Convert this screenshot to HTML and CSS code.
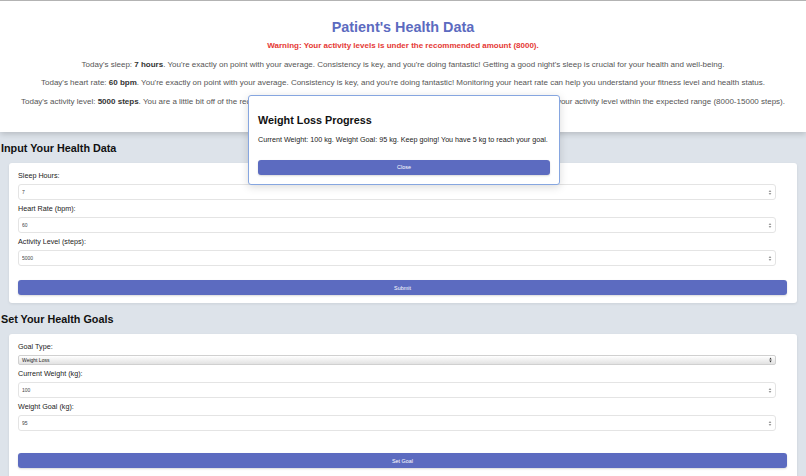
FILE: index.html
```html
<!DOCTYPE html>
<html lang="en">
<head>
<meta charset="utf-8">
<title>Patient's Health Data</title>
<link rel="stylesheet" href="styles.css">
</head>
<body>
<header class="summary">
  <h1 class="title">Patient's Health Data</h1>
  <p class="warning">Warning: Your activity levels is under the recommended amount (8000).</p>
  <p class="note">Today's sleep: <b>7 hours</b>. You're exactly on point with your average. Consistency is key, and you're doing fantastic! Getting a good night's sleep is crucial for your health and well-being.</p>
  <p class="note">Today's heart rate: <b>60 bpm</b>. You're exactly on point with your average. Consistency is key, and you're doing fantastic! Monitoring your heart rate can help you understand your fitness level and health status.</p>
  <p class="note">Today's activity level: <b>5000 steps</b>. You are a little bit off of the recommended range. Try adding a short walk or some light exercises to your day to bring your activity level within the expected range (8000-15000 steps).</p>
</header>

<main class="content">
  <h2 class="section-title">Input Your Health Data</h2>
  <form class="card">
    <label class="label">Sleep Hours:</label>
    <div class="field">
      <input class="input" value="7">
      <svg class="spin" viewBox="0 0 4 7" width="4" height="7"><path d="M0.6 3 L2 1.1 L3.4 3 Z M0.6 4 L2 5.9 L3.4 4 Z" fill="#9a9a9a"/></svg>
    </div>
    <label class="label">Heart Rate (bpm):</label>
    <div class="field">
      <input class="input" value="60">
      <svg class="spin" viewBox="0 0 4 7" width="4" height="7"><path d="M0.6 3 L2 1.1 L3.4 3 Z M0.6 4 L2 5.9 L3.4 4 Z" fill="#9a9a9a"/></svg>
    </div>
    <label class="label">Activity Level (steps):</label>
    <div class="field">
      <input class="input" value="5000">
      <svg class="spin" viewBox="0 0 4 7" width="4" height="7"><path d="M0.6 3 L2 1.1 L3.4 3 Z M0.6 4 L2 5.9 L3.4 4 Z" fill="#9a9a9a"/></svg>
    </div>
    <button type="button" class="btn btn-submit">Submit</button>
  </form>

  <h2 class="section-title">Set Your Health Goals</h2>
  <form class="card card-goals">
    <label class="label">Goal Type:</label>
    <div class="field">
      <div class="select">Weight Loss</div>
      <svg class="select-arrow" viewBox="0 0 3 6" width="3" height="6"><path d="M0.3 2.6 L1.5 0.6 L2.7 2.6 Z M0.3 3.4 L1.5 5.4 L2.7 3.4 Z" fill="#333"/></svg>
    </div>
    <label class="label">Current Weight (kg):</label>
    <div class="field">
      <input class="input" value="100">
      <svg class="spin" viewBox="0 0 4 7" width="4" height="7"><path d="M0.6 3 L2 1.1 L3.4 3 Z M0.6 4 L2 5.9 L3.4 4 Z" fill="#9a9a9a"/></svg>
    </div>
    <label class="label">Weight Goal (kg):</label>
    <div class="field">
      <input class="input" value="95">
      <svg class="spin" viewBox="0 0 4 7" width="4" height="7"><path d="M0.6 3 L2 1.1 L3.4 3 Z M0.6 4 L2 5.9 L3.4 4 Z" fill="#9a9a9a"/></svg>
    </div>
    <button type="button" class="btn btn-goal">Set Goal</button>
  </form>
</main>

<div class="modal">
  <h2 class="modal-title">Weight Loss Progress</h2>
  <p class="modal-text">Current Weight: 100 kg. Weight Goal: 95 kg. Keep going! You have 5 kg to reach your goal.</p>
  <button type="button" class="btn btn-close">Close</button>
</div>
</body>
</html>
```

FILE: styles.css
```css
html, body {
  margin: 0;
  padding: 0;
}

body {
  font-family: "Liberation Sans", Arial, sans-serif;
  background: #dde3ea;
  border-top: 1px solid #b3b3b3;
  min-height: 475px;
  overflow: hidden;
}

.summary {
  background: #ffffff;
  text-align: center;
  padding: 18px 10px 25px;
  box-shadow: 0 2px 6px rgba(0, 0, 0, 0.18);
  position: relative;
}

.title {
  margin: 0 0 4px;
  font-size: 14.4px;
  line-height: 17px;
  color: #5c6bc0;
  font-weight: bold;
}

.warning,
.note {
  margin: 7px 0;
  font-size: 8px;
  line-height: 11.5px;
}

.warning {
  margin-top: 0;
  color: #e53935;
  font-weight: bold;
}

.note {
  color: #555555;
}

.note b {
  color: #333333;
}

.note:last-child {
  margin-bottom: 0;
}

.content {
  padding: 6px 0 0;
}

.section-title {
  margin: 0;
  padding: 0 0 0 1px;
  font-size: 10.8px;
  line-height: 12.4px;
  color: #111;
  font-weight: bold;
}

.content .section-title {
  margin: 4px 0 9px;
}

.card + .section-title {
  margin-top: 10px;
}

.card {
  margin: 0 9px 0 9px;
  background: #ffffff;
  border-radius: 3px;
  padding: 8px 10px 8px 9px;
  box-shadow: 0 1px 3px rgba(0, 0, 0, 0.08);
}

.card-goals {
  padding-bottom: 20px;
}

.label {
  display: block;
  font-size: 7.2px;
  line-height: 9px;
  color: #222;
  margin-bottom: 4px;
}

.field {
  position: relative;
  width: calc(100% - 11px);
  margin-bottom: 4px;
}

.input {
  display: block;
  box-sizing: border-box;
  width: 100%;
  height: 16px;
  border: 1px solid #e4e4e4;
  border-radius: 3px;
  background: #fff;
  padding: 0 3px;
  font-family: "Liberation Sans", Arial, sans-serif;
  font-size: 5px;
  color: #444;
  outline: none;
}

.spin {
  position: absolute;
  right: 4px;
  top: 4.5px;
}

.select {
  box-sizing: border-box;
  height: 10px;
  border: 1px solid #d0d0d0;
  border-radius: 2px;
  background: linear-gradient(#ffffff, #ededed 60%, #e2e2e2);
  padding: 0 3px;
  font-size: 5px;
  line-height: 8px;
  color: #222;
}

.select-arrow {
  position: absolute;
  right: 4px;
  top: 2px;
}

.btn {
  display: block;
  width: 100%;
  height: 15px;
  border: none;
  border-radius: 3px;
  background: #5c6bc0;
  color: #ffffff;
  font-family: "Liberation Sans", Arial, sans-serif;
  font-size: 5.4px;
  padding: 0;
  box-shadow: 0 1px 2px rgba(0, 0, 0, 0.15);
}

.btn-submit {
  margin-top: 13.6px;
}

.btn-goal {
  margin-top: 21.6px;
}

.modal {
  position: absolute;
  left: 248px;
  top: 95px;
  width: 292px;
  padding: 9px;
  background: #ffffff;
  border: 1px solid #86a6e0;
  border-radius: 3px;
  box-shadow: 0 2px 8px rgba(0, 0, 0, 0.15);
}

.modal-title {
  margin: 9px 0 8px;
  font-size: 10.8px;
  line-height: 13px;
  color: #111;
  font-weight: bold;
}

.modal-text {
  margin: 0 0 16px;
  font-size: 7.2px;
  line-height: 9px;
  color: #222;
}

.btn-close {
  height: 14.5px;
}
```
